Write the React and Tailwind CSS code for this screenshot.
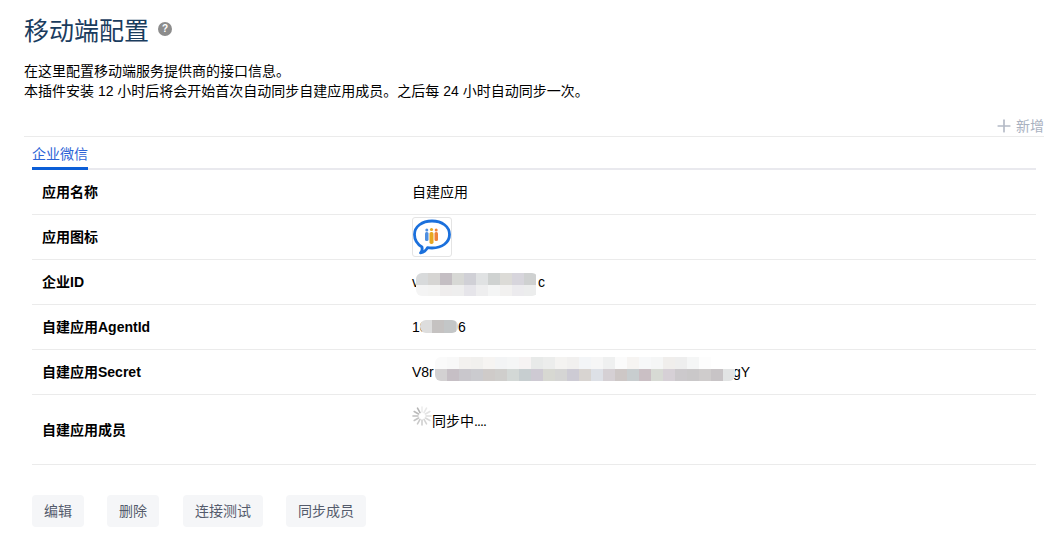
import { Plus } from 'lucide-react';

const FONT = "font-['Liberation_Sans','Noto_Sans_CJK_SC',sans-serif]";

const idTop = ['#d8dadb', '#d6d5d3', '#c4bec3', '#d7d8d5', '#d0d0d6', '#e0e2e3', '#cfd2d1', '#dcdbd7', '#d7d5dc', '#cfd1d1'];
const idBottom = ['#f4f4f4', '#f3f3f2', '#efeded', '#eeeeee', '#e6e5ea', '#eeeeef', '#f4f5f5', '#f2f1f0', '#ecebee', '#eceded'];
const agentRow = ['#dddddd', '#c5c2c1', '#c3c6c7', '#d4d6d6'];
const secretTop = ['#fafafa', '#f8f8f8', '#f3f1ef', '#f1f0ee', '#f6f4f2', '#f3f4f5', '#f5f6f6', '#f6f3f3', '#e8eae9', '#ecedec', '#f4f3f1', '#f1f0ef', '#f3f5f7', '#f6f6f6', '#eff0f0', '#fbfbfb', '#f6f4f2', '#f7f8f9', '#f5f6f6', '#f0eeec', '#eeeeee', '#f5f6f6', '#fdfdfd', '#ffffff', '#ffffff'];
const secretBottom = ['#d3d1d2', '#c6bfc5', '#c9c7cc', '#cbcbcf', '#cfcbc9', '#cfcecc', '#d3d8d6', '#c7ced0', '#cecad3', '#d7d8d2', '#d5d5d4', '#cdcbd4', '#d8d4d1', '#dde0e6', '#d5d0d4', '#cdc7c6', '#c8cdcf', '#cabfc4', '#d7dad4', '#d6d0d6', '#ccc9cc', '#cac8c9', '#cfcccc', '#c8c4c6', '#e2e4e4'];

function Mosaic({ rows, className }) {
  return (
    <span className={`absolute flex flex-col overflow-hidden rounded-[6px] ${className}`}>
      {rows.map((row, r) => (
        <span key={r} className="flex flex-1">
          {row.map((color, i) => (
            <span key={i} className="h-full w-3 shrink-0" style={{ backgroundColor: color }} />
          ))}
        </span>
      ))}
    </span>
  );
}

function BubbleIcon() {
  return (
    <span className="flex h-10 w-10 items-center justify-center rounded-[3px] border border-[#e4e4e4]">
      <svg width="38" height="38" viewBox="0 0 38 38" fill="none">
        <path
          d="M9 29C4 26 1.500 22 1.500 16.500 1.500 8.500 9 3 19 3s17.500 5.500 17.500 13.500S29 30 19 30c-1.500 0-3-.1-4.500-.4-1 2-3.500 4.500-7 5.300 1.500-1.500 2-3.500 1.500-5.900z"
          stroke="#1b70dc"
          strokeWidth="2.800"
          strokeLinejoin="round"
        />
        <rect x="12" y="14" width="3.500" height="9" rx="1.500" fill="#4f8fe0" />
        <rect x="16.500" y="14" width="4" height="12" rx="1.800" fill="#e8a820" />
        <rect x="21.500" y="14" width="3.500" height="9" rx="1.500" fill="#f0823a" />
        <circle cx="13.800" cy="12" r="1.500" fill="#4f8fe0" />
        <circle cx="18.500" cy="11.500" r="1.600" fill="#e8a820" />
        <circle cx="23.200" cy="12" r="1.500" fill="#f0823a" />
      </svg>
    </span>
  );
}

function Spinner() {
  const spokes = [0, 30, 60, 90, 120, 150, 180, 210, 240, 270, 300, 330];
  return (
    <svg width="20" height="20" viewBox="0 0 20 20" className="shrink-0">
      {spokes.map((deg, i) => (
        <line
          key={deg}
          x1="10"
          y1="1"
          x2="10"
          y2="6"
          stroke="#a8a8a8"
          strokeWidth="1.600"
          strokeLinecap="round"
          opacity={0.2 + (i / 12) * 0.7}
          transform={`rotate(${deg} 10 10)`}
        />
      ))}
    </svg>
  );
}

function Row({ label, children, tall }) {
  return (
    <div className={`flex items-center border-b border-[#ebebeb] ${tall ? 'h-[70px]' : 'h-[45px]'}`}>
      <div className="w-[370px] pl-[10px] font-bold">{label}</div>
      <div className="relative flex-1 pl-[10px]">{children}</div>
    </div>
  );
}

function Btn({ className, children }) {
  return (
    <button className={`h-8 rounded-[4px] bg-[#f5f6f8] text-center text-[#545b6c] ${className}`}>
      {children}
    </button>
  );
}

export default function App() {
  return (
    <div className={`${FONT} h-[552px] overflow-hidden bg-white pl-6 pr-[15px] pt-[13px] text-[14px] leading-5 text-black`}>
      <div className="flex items-center">
        <h1 className="text-[25px] leading-9 font-normal text-[#1a3c5e]">移动端配置</h1>
        <span className="-mt-[5px] ml-[9px] flex h-[14px] w-[14px] items-center justify-center rounded-full bg-[#8c8c8c] text-[10px] leading-none font-bold text-white">
          ?
        </span>
      </div>

      <p className="mt-[12px]">在这里配置移动端服务提供商的接口信息。</p>
      <p>本插件安装 12 小时后将会开始首次自动同步自建应用成员。之后每 24 小时自动同步一次。</p>

      <div className="mt-[15px] flex h-[20px] items-center justify-end text-[#a9b1bf]">
        <Plus size={20} strokeWidth={2} className="mr-[2px] text-[#b4bac6]" />
        <span>新增</span>
      </div>

      <div className="border-t border-[#ebebeb] pl-2 pr-2">
        <div className="flex h-[33px] items-end border-b-[2px] border-[#e9e9ee]">
          <div className="-mb-[2px] w-14 border-b-[3px] border-[#0b5ed7] pb-[3px] text-[#2e64d6]">企业微信</div>
        </div>

        <Row label="应用名称">自建应用</Row>
        <Row label="应用图标">
          <BubbleIcon />
        </Row>
        <Row label="企业ID">
          <span className="inline-block w-[126px]">v</span>
          <span>c</span>
          <Mosaic rows={[idTop, idBottom]} className="left-[14px] top-[1px] h-[23px] w-[122px]" />
        </Row>
        <Row label="自建应用AgentId">
          <span className="inline-block w-[46px]">10</span>
          <span>6</span>
          <Mosaic rows={[agentRow]} className="left-[18px] top-[3px] h-[13px] w-[38px]" />
        </Row>
        <Row label="自建应用Secret">
          <span className="inline-block w-[321px]">V8r</span>
          <span>gY</span>
          <Mosaic rows={[secretTop, secretBottom]} className="left-[33px] top-[-5px] h-[24px] w-[300px]" />
        </Row>
        <Row label="自建应用成员" tall>
          <div className="-mt-[24px] flex h-5 items-start">
            <Spinner />
            <span className="mt-[5px]">
              同步中<span className="tracking-[-0.9px]">....</span>
            </span>
          </div>
        </Row>

        <div className="mt-[30px] flex">
          <Btn className="w-[52px]">编辑</Btn>
          <Btn className="ml-[23px] w-[52px]">删除</Btn>
          <Btn className="ml-[24px] w-20">连接测试</Btn>
          <Btn className="ml-[23px] w-20">同步成员</Btn>
        </div>
      </div>
    </div>
  );
}
